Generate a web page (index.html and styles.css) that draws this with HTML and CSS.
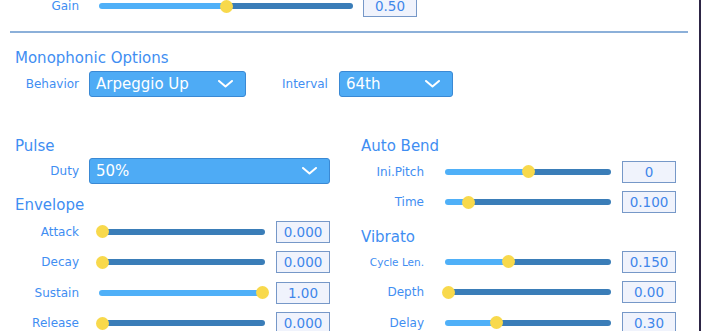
FILE: index.html
```html
<!DOCTYPE html>
<html lang="en">
<head>
    <meta charset="UTF-8">
    <title>Monophonic Options</title>
    <link rel="stylesheet" href="styles.css">
</head>
<body>
<div class="panel">
    <div class="row gain-row">
        <span class="label">Gain</span>
        <div class="slider gain" style="--p:.5"></div>
        <span class="value">0.50</span>
    </div>
    <div class="divider"></div>

    <h2 class="heading">Monophonic Options</h2>
    <div class="row mono-row">
        <span class="label">Behavior</span>
        <div class="select behavior">
            <span>Arpeggio Up</span>
            <svg class="chevron" width="15" height="8" viewBox="0 0 15 8"><polyline points="1,1 7.5,6.5 14,1"/></svg>
        </div>
        <span class="interval-label">Interval</span>
        <div class="select interval">
            <span>64th</span>
            <svg class="chevron" width="15" height="8" viewBox="0 0 15 8"><polyline points="1,1 7.5,6.5 14,1"/></svg>
        </div>
    </div>

    <div class="columns">
        <div class="col col-left">
            <h2 class="heading">Pulse</h2>
            <div class="row duty-row">
                <span class="label">Duty</span>
                <div class="select duty">
                    <span>50%</span>
                    <svg class="chevron" width="15" height="8" viewBox="0 0 15 8"><polyline points="1,1 7.5,6.5 14,1"/></svg>
                </div>
            </div>
            <h2 class="heading envelope">Envelope</h2>
            <div class="rows">
                <div class="row slider-row">
                    <span class="label">Attack</span>
                    <div class="slider" style="--p:0"></div>
                    <span class="value">0.000</span>
                </div>
                <div class="row slider-row">
                    <span class="label">Decay</span>
                    <div class="slider" style="--p:0"></div>
                    <span class="value">0.000</span>
                </div>
                <div class="row slider-row">
                    <span class="label">Sustain</span>
                    <div class="slider" style="--p:1"></div>
                    <span class="value">1.00</span>
                </div>
                <div class="row slider-row">
                    <span class="label">Release</span>
                    <div class="slider" style="--p:0"></div>
                    <span class="value">0.000</span>
                </div>
            </div>
        </div>

        <div class="col col-right">
            <h2 class="heading">Auto Bend</h2>
            <div class="rows">
                <div class="row slider-row">
                    <span class="label">Ini.Pitch</span>
                    <div class="slider" style="--p:.5"></div>
                    <span class="value">0</span>
                </div>
                <div class="row slider-row">
                    <span class="label">Time</span>
                    <div class="slider" style="--p:.13"></div>
                    <span class="value">0.100</span>
                </div>
            </div>
            <h2 class="heading vibrato">Vibrato</h2>
            <div class="rows">
                <div class="row slider-row">
                    <span class="label small">Cycle Len.</span>
                    <div class="slider" style="--p:.38"></div>
                    <span class="value">0.150</span>
                </div>
                <div class="row slider-row">
                    <span class="label">Depth</span>
                    <div class="slider" style="--p:0"></div>
                    <span class="value">0.00</span>
                </div>
                <div class="row slider-row">
                    <span class="label">Delay</span>
                    <div class="slider" style="--p:.3"></div>
                    <span class="value">0.30</span>
                </div>
            </div>
        </div>
    </div>
</div>
</body>
</html>
```

FILE: styles.css
```css
html, body{
    margin: 0;
    padding: 0;
    background: #fff;
    overflow: hidden;
}
body{
    font-family: "DejaVu Sans", "Liberation Sans", sans-serif;
    color: #3f8ef2;
}
.panel{
    box-sizing: border-box;
    width: 701px;
    height: 336px;
    border-right: 2px solid #2d2545;
}
.row{
    display: flex;
    align-items: center;
}
.label{
    flex: none;
    width: 79px;
    text-align: right;
    font-size: 12px;
    line-height: 16px;
}
.label.small{
    font-size: 10.5px;
}
.heading{
    margin: 0 0 0 15px;
    font-size: 15px;
    line-height: 20px;
    font-weight: normal;
    color: #3f8ef2;
}

/* top gain row */
.gain-row{
    height: 22px;
    margin-top: -5px;
}
.divider{
    height: 2px;
    margin: 14px 11px 0 10px;
    background: #8cb0d9;
}
.panel > .heading{
    margin-top: 14.7px;
}

/* sliders */
.slider{
    --x: calc(3px + var(--p) * (100% - 6px));
    position: relative;
    flex: none;
    width: 166px;
    height: 6px;
    margin-left: 20px;
    border-radius: 3px;
    background: linear-gradient(to right, #4fb0f8 0, #4fb0f8 var(--x), #3a7db8 var(--x), #3a7db8 100%);
}
.slider::after{
    content: '';
    position: absolute;
    top: 50%;
    left: var(--x);
    width: 13px;
    height: 13px;
    margin: -6.5px 0 0 -6.5px;
    border-radius: 50%;
    background: #f8d94c;
}
.slider.gain{
    width: 254px;
}
.value{
    flex: none;
    box-sizing: border-box;
    width: 54px;
    height: 22px;
    margin-left: 11px;
    border: 1px solid #7698c8;
    background: #f0f3fc;
    text-align: center;
    font-size: 13.5px;
    line-height: 20px;
    color: #3f86ea;
}
.gain-row .value{
    margin-left: 10px;
}

/* dropdowns */
.select{
    box-sizing: border-box;
    display: flex;
    align-items: center;
    justify-content: space-between;
    height: 26px;
    margin-left: 10px;
    padding: 0 12px 0 6px;
    border: 1px solid #3a89d4;
    border-radius: 3px;
    background: #4eabf5;
    color: #fff;
    font-size: 15px;
}
.chevron polyline{
    fill: none;
    stroke: #fff;
    stroke-width: 2;
    stroke-linecap: round;
    stroke-linejoin: round;
}
.mono-row{
    margin-top: 3.3px;
}
.behavior{
    width: 157px;
}
.interval-label{
    margin-left: 36px;
    font-size: 12px;
}
.interval{
    width: 114px;
    margin-left: 11px;
}
.duty{
    width: 241px;
}

/* two columns */
.columns{
    display: flex;
    margin-top: 39px;
}
.col-left{
    width: 345px;
}
.col-right .heading{
    margin-left: 16px;
}
.col-right .slider{
    margin-left: 21px;
}
.duty-row{
    margin-top: 2px;
}
.heading.envelope{
    margin-top: 11px;
}
.slider-row{
    height: 30.4px;
}
.col-left .rows{
    margin-top: 1.8px;
}
.col-right .rows{
    margin-top: 0.8px;
}
.heading.vibrato{
    margin-top: 9px;
}
.vibrato + .rows{
    margin-top: 0.2px;
}
```
